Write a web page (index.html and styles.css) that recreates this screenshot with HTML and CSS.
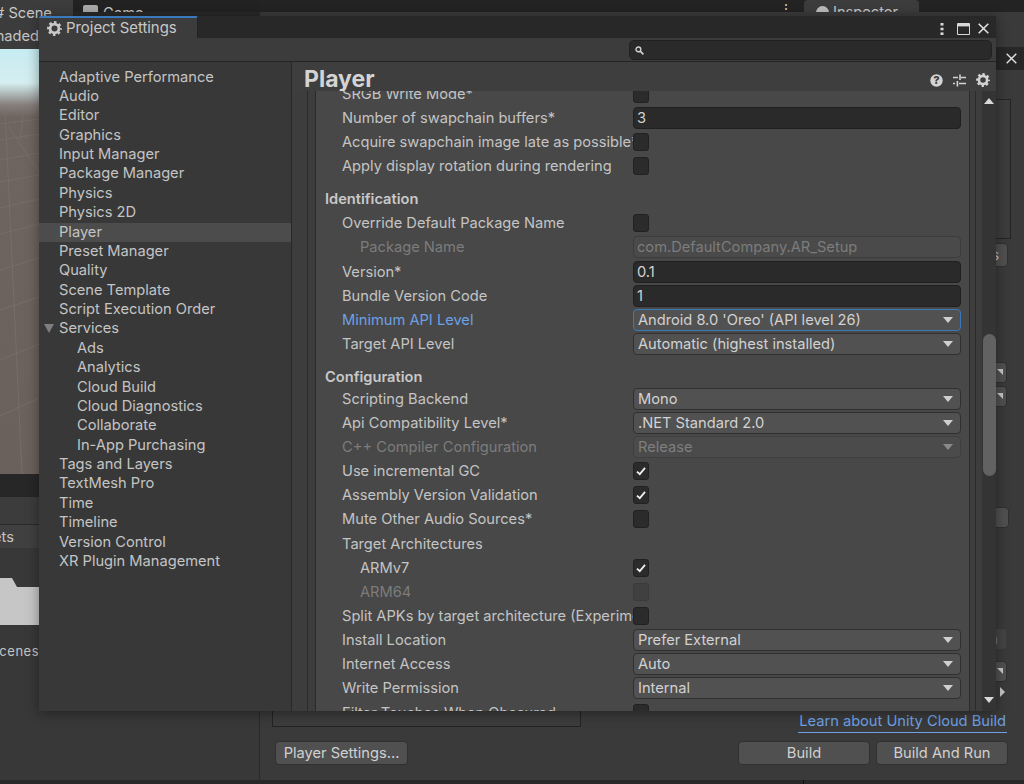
FILE: index.html
```html
<!DOCTYPE html>
<html lang="en">
<head>
<meta charset="utf-8">
<title>Project Settings</title>
<link rel="stylesheet" href="styles.css">
</head>
<body>
<svg class="defs" width="0" height="0" aria-hidden="true">
  <defs>
    <symbol id="gear" viewBox="0 0 16 16">
      <circle cx="8" cy="8" r="4.7" fill="none" stroke="currentColor" stroke-width="3"/>
      <circle cx="8" cy="8" r="6.6" fill="none" stroke="currentColor" stroke-width="2.6" stroke-dasharray="2.7 2.48" stroke-dashoffset="1.35"/>
    </symbol>
    <symbol id="check" viewBox="0 0 16 18">
      <path d="M3.4 9.6 6.6 12.6 12.6 5.4" fill="none" stroke="#f0f0f0" stroke-width="2"/>
    </symbol>
    <symbol id="arrow" viewBox="0 0 10 6" preserveAspectRatio="none">
      <path d="M0 0H10L5 6Z" fill="currentColor"/>
    </symbol>
  </defs>
</svg>

<div class="editor">
  <div class="left">
    <div class="left-top">
      <div class="scene-tab"><span class="scene-label"># Scene</span></div>
      <div class="game-strip"><span class="game-icon"></span><span class="game-label">Game</span></div>
    </div>
    <div class="shaded"><span class="clip-text">Shaded</span></div>
    <div class="scene-view">
      <svg class="grid" viewBox="0 0 39 364" preserveAspectRatio="none" aria-hidden="true">
        <g stroke="#7a706a" stroke-width="0.8" fill="none">
          <path d="M0 14 39 9M0 30 39 24M0 50 39 43M0 72 39 65M0 98 39 89M0 124 39 114M0 160 39 148M0 200 39 187M0 250 39 234M0 306 39 288"/>
          <path d="M5 0 22 364M24 0 20 30M8 16 39 62"/>
        </g>
      </svg>
    </div>
    <div class="dark-band"></div>
    <div class="mid-band"></div>
    <div class="assets-band"><span class="assets-label">Assets</span></div>
    <div class="project-area">
      <svg class="folder" viewBox="0 0 39 47" aria-hidden="true">
        <path d="M0 0H12L17 9H39V47H0Z" fill="#c6c6c6"/>
      </svg>
      <span class="scenes-label">Scenes</span>
    </div>
  </div>

  <div class="rightpane">
    <div class="strip">
      <span class="strip-kebab">⋮</span>
      <div class="inspector-tab"><span class="inspector-dot"></span>Inspector</div>
    </div>
    <div class="build-panel">
      <div class="side-stubs">
        <div class="side-tabbar">
          <svg class="side-close" viewBox="0 0 11 11"><path d="M.7 .7 10.3 10.3M10.3 .7 .7 10.3" stroke="#e4e4e4" stroke-width="1.4"/></svg>
        </div>
        <div class="stub-box"></div>
        <div class="stub-btn stub-s">s</div>
        <div class="stub-drop"></div>
        <div class="stub-drop stub-drop-next"></div>
        <div class="stub-plain"></div>
        <div class="stub-faded">n</div>
        <div class="stub-drop stub-drop-last"></div>
        <div class="stub-tri"></div>
      </div>
      <div class="link-row">
        <div class="list-box"></div>
        <a class="cloud-link">Learn about Unity Cloud Build</a>
      </div>
      <div class="button-row">
        <button class="btn btn-player">Player Settings...</button>
        <div class="btn-spacer"></div>
        <button class="btn btn-build">Build</button>
        <button class="btn btn-build">Build And Run</button>
      </div>
    </div>
    <div class="status"><span class="status-divider"></span></div>
  </div>
</div>

<section class="window">
  <header class="titlebar">
    <div class="title-tab">
      <svg class="title-gear"><use href="#gear"/></svg>
      <span>Project Settings</span>
    </div>
    <div class="title-actions">
      <svg class="kebab" viewBox="0 0 4 12"><g fill="#d8d8d8"><rect x="0.5" width="3" height="2.6"/><rect x="0.5" y="4.7" width="3" height="2.6"/><rect x="0.5" y="9.4" width="3" height="2.6"/></g></svg>
      <svg class="maximize" viewBox="0 0 13 12"><path d="M.5 .5H12.5V11.5H.5Z" fill="none" stroke="#d8d8d8"/><rect x="1" y="1" width="11" height="2.4" fill="#d8d8d8"/></svg>
      <svg class="close" viewBox="0 0 11 11"><path d="M.7 .7 10.3 10.3M10.3 .7 .7 10.3" stroke="#e4e4e4" stroke-width="1.5"/></svg>
    </div>
  </header>
  <div class="toolbar">
    <div class="search">
      <svg class="search-icon" viewBox="0 0 9 9"><circle cx="3.4" cy="3.4" r="2.4" fill="none" stroke="#d0d0d0" stroke-width="1.4"/><path d="M5.2 5.2 8.4 8.4" stroke="#d0d0d0" stroke-width="1.7"/></svg>
    </div>
  </div>
  <div class="window-body">
    <nav class="sidebar">
      <div class="nav">Adaptive Performance</div>
      <div class="nav">Audio</div>
      <div class="nav">Editor</div>
      <div class="nav">Graphics</div>
      <div class="nav">Input Manager</div>
      <div class="nav">Package Manager</div>
      <div class="nav">Physics</div>
      <div class="nav">Physics 2D</div>
      <div class="nav nav-active">Player</div>
      <div class="nav">Preset Manager</div>
      <div class="nav">Quality</div>
      <div class="nav">Scene Template</div>
      <div class="nav">Script Execution Order</div>
      <div class="nav nav-parent"><svg class="nav-arrow"><use href="#arrow"/></svg>Services</div>
      <div class="nav nav-child">Ads</div>
      <div class="nav nav-child">Analytics</div>
      <div class="nav nav-child">Cloud Build</div>
      <div class="nav nav-child">Cloud Diagnostics</div>
      <div class="nav nav-child">Collaborate</div>
      <div class="nav nav-child">In-App Purchasing</div>
      <div class="nav">Tags and Layers</div>
      <div class="nav">TextMesh Pro</div>
      <div class="nav">Time</div>
      <div class="nav">Timeline</div>
      <div class="nav">Version Control</div>
      <div class="nav">XR Plugin Management</div>
    </nav>
    <main class="main">
      <div class="main-header">
        <h1 class="player-title">Player</h1>
        <div class="header-icons">
          <svg class="hicon" viewBox="0 0 13 13"><circle cx="6.5" cy="6.5" r="6.2" fill="#d4d4d4"/><text x="6.5" y="10.2" class="help-mark">?</text></svg>
          <svg class="hicon" viewBox="0 0 13 13"><g stroke="#d4d4d4" stroke-width="1.3"><path d="M0 3.5H5M8 3.5H13M0 9.5H2M6 9.5H13"/><path d="M7 .5V6M4.4 7V12.5" stroke-width="1.6"/></g></svg>
          <svg class="hicon hicon-gear"><use href="#gear"/></svg>
        </div>
      </div>
      <div class="scroller">
        <div class="gutter-a"></div>
        <div class="gutter-b"></div>
        <div class="panel">
          <div class="panel-inner">
            <div class="row"><span class="label">SRGB Write Mode*</span><span class="cb"></span></div>
            <div class="row"><span class="label">Number of swapchain buffers*</span><span class="field">3</span></div>
            <div class="row"><span class="label">Acquire swapchain image late as possible*</span><span class="cb"></span></div>
            <div class="row"><span class="label">Apply display rotation during rendering</span><span class="cb"></span></div>
            <div class="section">Identification</div>
            <div class="row"><span class="label">Override Default Package Name</span><span class="cb"></span></div>
            <div class="row"><span class="label label-sub label-off">Package Name</span><span class="field field-off">com.DefaultCompany.AR_Setup</span></div>
            <div class="row"><span class="label">Version*</span><span class="field">0.1</span></div>
            <div class="row"><span class="label">Bundle Version Code</span><span class="field">1</span></div>
            <div class="row"><span class="label label-blue">Minimum API Level</span><span class="drop drop-focus">Android 8.0 'Oreo' (API level 26)<svg class="drop-arrow"><use href="#arrow"/></svg></span></div>
            <div class="row"><span class="label">Target API Level</span><span class="drop">Automatic (highest installed)<svg class="drop-arrow"><use href="#arrow"/></svg></span></div>
            <div class="section section-tight">Configuration</div>
            <div class="row"><span class="label">Scripting Backend</span><span class="drop">Mono<svg class="drop-arrow"><use href="#arrow"/></svg></span></div>
            <div class="row"><span class="label">Api Compatibility Level*</span><span class="drop">.NET Standard 2.0<svg class="drop-arrow"><use href="#arrow"/></svg></span></div>
            <div class="row"><span class="label label-off">C++ Compiler Configuration</span><span class="drop drop-off">Release<svg class="drop-arrow"><use href="#arrow"/></svg></span></div>
            <div class="row"><span class="label">Use incremental GC</span><span class="cb"><svg class="tick"><use href="#check"/></svg></span></div>
            <div class="row"><span class="label">Assembly Version Validation</span><span class="cb"><svg class="tick"><use href="#check"/></svg></span></div>
            <div class="row"><span class="label">Mute Other Audio Sources*</span><span class="cb"></span></div>
            <div class="row"><span class="label">Target Architectures</span></div>
            <div class="row"><span class="label label-sub">ARMv7</span><span class="cb"><svg class="tick"><use href="#check"/></svg></span></div>
            <div class="row"><span class="label label-sub label-off">ARM64</span><span class="cb cb-off"></span></div>
            <div class="row"><span class="label">Split APKs by target architecture (Experimental)</span><span class="cb"></span></div>
            <div class="row"><span class="label">Install Location</span><span class="drop">Prefer External<svg class="drop-arrow"><use href="#arrow"/></svg></span></div>
            <div class="row"><span class="label">Internet Access</span><span class="drop">Auto<svg class="drop-arrow"><use href="#arrow"/></svg></span></div>
            <div class="row"><span class="label">Write Permission</span><span class="drop">Internal<svg class="drop-arrow"><use href="#arrow"/></svg></span></div>
            <div class="row"><span class="label">Filter Touches When Obscured</span><span class="cb"></span></div>
          </div>
        </div>
        <div class="gutter-c"></div>
        <div class="gutter-d"></div>
        <div class="scrollbar">
          <svg class="sb-arrow sb-up" viewBox="0 0 10 6"><path d="M0 6H10L5 0Z" fill="#d8d8d8"/></svg>
          <div class="sb-thumb"></div>
          <svg class="sb-arrow sb-down" viewBox="0 0 10 6"><path d="M0 0H10L5 6Z" fill="#d8d8d8"/></svg>
        </div>
      </div>
    </main>
  </div>
</section>
</body>
</html>
```
FILE: styles.css
```css
* { box-sizing: border-box; }
html, body { margin: 0; padding: 0; }
body {
  width: 1024px;
  height: 784px;
  overflow: hidden;
  position: relative;
  background: #282828;
  font-family: Inter, "Liberation Sans", sans-serif;
  font-size: 14.65px;
  color: #c4c4c4;
}
.defs { position: absolute; }

/* background editor */
.editor { display: flex; width: 1024px; height: 784px; }
.left { width: 259px; display: flex; flex-direction: column; flex: none; }
.left-top { display: flex; height: 25px; background: #282828; }
.scene-tab { width: 73px; height: 25px; background: #3c3c3c; overflow: hidden; }
.scene-label { display: block; margin: 4px 0 0 -5px; white-space: nowrap; color: #c8c8c8; }
.game-strip { flex: 1; height: 12px; background: #222222; overflow: hidden; display: flex; gap: 5px; padding: 5px 0 0 10px; }
.game-icon { width: 15px; height: 12px; background: #a8a8a8; border-radius: 2px; }
.game-label { color: #c4c4c4; line-height: 17px; }
.shaded { height: 24px; background: #3c3c3c; display: flex; justify-content: flex-end; padding-right: 220px; line-height: 23px; }
.clip-text { white-space: nowrap; color: #c4c4c4; }
.scene-view {
  height: 425px;
  background: linear-gradient(#c6ecf2 0, #d6eef0 34px, #857f7c 56px, #6f6560 68px, #6b615c 100%);
  position: relative;
}
.grid { position: absolute; left: 0; bottom: 0; width: 39px; height: 364px; }
.dark-band { height: 23px; background: #272727; }
.mid-band { height: 28px; background: #3c3c3c; border-bottom: 1px solid #2a2a2a; }
.assets-band { height: 23px; background: #404040; line-height: 24px; }
.assets-label { display: flex; justify-content: flex-end; width: 14px; overflow: hidden; white-space: nowrap; color: #c4c4c4; }
.project-area { flex: 1; background: #383838; padding-top: 30px; display: flex; flex-direction: column; border-bottom: 4px solid #282828; }
.folder { width: 39px; height: 47px; flex: none; }
.scenes-label { width: 39px; display: flex; justify-content: flex-end; margin-top: 18px; font-size: 13px; white-space: nowrap; overflow: hidden; letter-spacing: .5px; color: #c4c4c4; }

.rightpane { flex: 1; display: flex; flex-direction: column; min-width: 0; }
.strip { height: 12px; background: #232323; overflow: hidden; display: flex; padding-left: 520px; }
.strip-kebab { width: 25px; line-height: 17px; font-size: 14px; color: #d0d0d0; }
.inspector-tab { width: 115px; height: 30px; background: #3c3c3c; border-radius: 4px 4px 0 0; padding: 0 0 0 12px; line-height: 25px; display: flex; gap: 4px; color: #c4c4c4; }
.inspector-dot { width: 13px; height: 13px; margin-top: 6px; background: #bcbcbc; border-radius: 50%; flex: none; }
.build-panel { flex: 1; background: #3a3a3a; border-left: 1px solid #2a2a2a; display: flex; flex-direction: column; }
.side-stubs { flex: 1; display: flex; flex-direction: column; align-items: flex-end; }
.side-tabbar { width: 28px; height: 23px; margin-top: 35px; background: #272727; display: flex; justify-content: flex-end; align-items: center; padding-right: 7px; flex: none; }
.side-close { width: 11px; height: 11px; }
.stub-box { width: 40px; height: 140px; margin-top: 29px; margin-right: 13px; border: 1px solid #252525; background: #3c3c3c; }
.stub-btn, .stub-drop, .stub-plain, .stub-faded { width: 40px; background: #505050; border: 1px solid #303030; border-radius: 4px; }
.stub-s { height: 24px; margin-top: 4px; margin-right: 16px; font-size: 13px; line-height: 22px; text-align: right; padding-right: 8px; }
.stub-drop { height: 21px; margin-top: 95px; margin-right: 17px; display: flex; justify-content: flex-end; padding: 6px 3px 0 0; }
.stub-drop::after { content: ""; width: 0; height: 0; border-top: 6px solid #c8c8c8; border-left: 6px solid transparent; }
.stub-drop-next { margin-top: 3px; }
.stub-plain { height: 21px; margin-top: 100px; margin-right: 15px; }
.stub-faded { height: 22px; margin-top: 100px; margin-right: 17px; background: #444444; border-color: #3a3a3a; font-size: 13px; line-height: 20px; text-align: right; padding-right: 8px; color: #777777; }
.stub-drop-last { margin-top: 11px; }
.stub-tri { width: 0; height: 0; margin-top: 5px; margin-right: 19px; border-left: 5px solid #c8c8c8; border-top: 5px solid transparent; border-bottom: 5px solid transparent; }
.link-row { display: flex; justify-content: space-between; align-items: flex-end; height: 32px; padding: 0 17px 0 12px; flex: none; }
.list-box { width: 309px; height: 27px; margin-bottom: 5px; border: 1px solid #232323; background: #3c3c3c; }
.cloud-link { color: #6da0e4; border-bottom: 1px solid #6da0e4; line-height: 20px; height: 22px; margin-bottom: -1px; padding: 0 1px; white-space: nowrap; }
.button-row { display: flex; gap: 6px; padding: 9px 16px 15px 15px; flex: none; }
.btn { height: 24px; font: inherit; color: #d0d0d0; background: #505050; border: 1px solid #303030; border-radius: 4px; padding: 0; }
.btn-player { width: 133px; }
.btn-spacer { flex: 1; }
.btn-build { width: 132px; }
.status { height: 4px; background: #282828; border-left: 1px solid #2a2a2a; padding-left: 543px; }
.status-divider { display: block; width: 1px; height: 4px; background: #111111; }

/* settings window */
.window {
  position: absolute;
  left: 39px;
  top: 16px;
  width: 957px;
  height: 695px;
  background: #3c3c3c;
  display: flex;
  flex-direction: column;
  box-shadow: 0 2px 12px rgba(0, 0, 0, .4);
}
.titlebar { height: 22px; flex: none; background: #282828; display: flex; justify-content: space-between; }
.title-tab { width: 159px; background: #3c3c3c; border-top: 2px solid #3a79bb; border-right: 1px solid #232323; display: flex; align-items: center; gap: 4px; padding-left: 8px; color: #c8c8c8; border-radius: 2px 2px 0 0; font-size: 14.9px; }
.title-gear { width: 15px; height: 15px; color: #c8c8c8; flex: none; }
.title-actions { display: flex; align-items: center; padding: 3px 7px 0 0; }
.kebab { width: 4px; height: 12px; margin-right: 13px; }
.maximize { width: 13px; height: 12px; margin-right: 8px; }
.close { width: 11px; height: 11px; }
.toolbar { height: 24px; flex: none; border-bottom: 1px solid #242424; display: flex; justify-content: flex-end; padding: 2px 4px 0 0; background: #3c3c3c; }
.search { width: 363px; height: 20px; background: #2a2a2a; border: 1px solid #212121; border-radius: 5px; padding: 5px 0 0 5px; display: flex; }
.search-icon { width: 9px; height: 9px; }
.window-body { flex: 1; display: flex; min-height: 0; }
.sidebar { width: 253px; flex: none; background: #383838; border-right: 1px solid #282828; padding-top: 5.6px; }
.nav { height: 19.38px; line-height: 19.38px; padding-left: 20px; white-space: nowrap; color: #c4c4c4; position: relative; display: flex; align-items: center; }
.nav-active { background: #4c4c4c; }
.nav-child { padding-left: 38px; }
.nav-arrow { position: absolute; left: 5px; top: 5px; width: 10px; height: 9px; color: #7e7e7e; }
.main { flex: 1; display: flex; flex-direction: column; min-width: 0; background: #3d3d3d; }
.main-header { height: 29px; flex: none; display: flex; justify-content: space-between; padding-left: 12px; background: #3e3e3e; }
.player-title { margin: 0; font-size: 23px; font-weight: 700; line-height: 34px; color: #d4d4d4; }
.header-icons { display: flex; gap: 10px; padding: 12px 6px 0 0; }
.hicon { width: 13px; height: 13px; }
.hicon-gear { width: 14px; height: 14px; margin-top: -1px; color: #d4d4d4; }
.help-mark { font-size: 11px; font-weight: 800; text-anchor: middle; fill: #3e3e3e; }
.scroller { flex: 1; display: flex; min-height: 0; }
.gutter-a { width: 16px; flex: none; border-right: 1px solid #2b2b2b; }
.gutter-b { width: 8px; flex: none; border-right: 1px solid #2b2b2b; }
.panel { width: 653px; flex: none; background: #484848; overflow: hidden; }
.panel-inner { margin-top: -9px; }
.gutter-c { width: 7px; flex: none; border-left: 1px solid #2b2b2b; border-right: 1px solid #2b2b2b; }
.gutter-d { width: 6px; flex: none; }
.scrollbar { flex: 1; background: #343434; display: flex; flex-direction: column; align-items: center; padding-top: 7px; }
.sb-arrow { width: 10px; height: 6px; flex: none; }
.sb-thumb { width: 13px; height: 142px; margin-top: 230px; background: #626262; border-radius: 7px; flex: none; }
.sb-down { margin-top: 221px; }
.row { height: 24.15px; display: flex; align-items: center; }
.label { width: 291px; margin-left: 26px; flex: none; white-space: nowrap; overflow: hidden; color: #c4c4c4; }
.label-sub { width: 273px; margin-left: 44px; }
.label-off { color: #7c7c7c; }
.label-blue { color: #6da0e4; }
.section { height: 24.15px; margin-top: 8.5px; padding-left: 9px; font-weight: 600; color: #c8c8c8; display: flex; align-items: center; }
.section-tight { margin-bottom: -2px; }
.field, .drop { width: 328px; height: 22px; display: flex; align-items: center; padding-left: 4px; border-radius: 4px; white-space: nowrap; position: relative; color: #d2d2d2; }
.field { background: #2a2a2a; border: 1px solid #202020; padding-left: 3px; }
.field-off { background: #4a4a4a; border-color: #3c3c3c; color: #7c7c7c; }
.drop { background: #515151; border: 1px solid #303030; }
.drop-focus { border-color: #3a79bb; }
.drop-off { background: #4b4b4b; border-color: #3f3f3f; color: #7e7e7e; }
.drop-arrow { position: absolute; right: 7px; top: 7px; width: 10px; height: 6px; color: #cfcfcf; }
.drop-off .drop-arrow { color: #8a8a8a; }
.cb { width: 16px; height: 18px; background: #2b2b2b; border: 1px solid #212121; border-radius: 3px; flex: none; display: flex; }
.cb-off { background: #404040; border-color: #3a3a3a; }
.tick { width: 14px; height: 16px; }
```
